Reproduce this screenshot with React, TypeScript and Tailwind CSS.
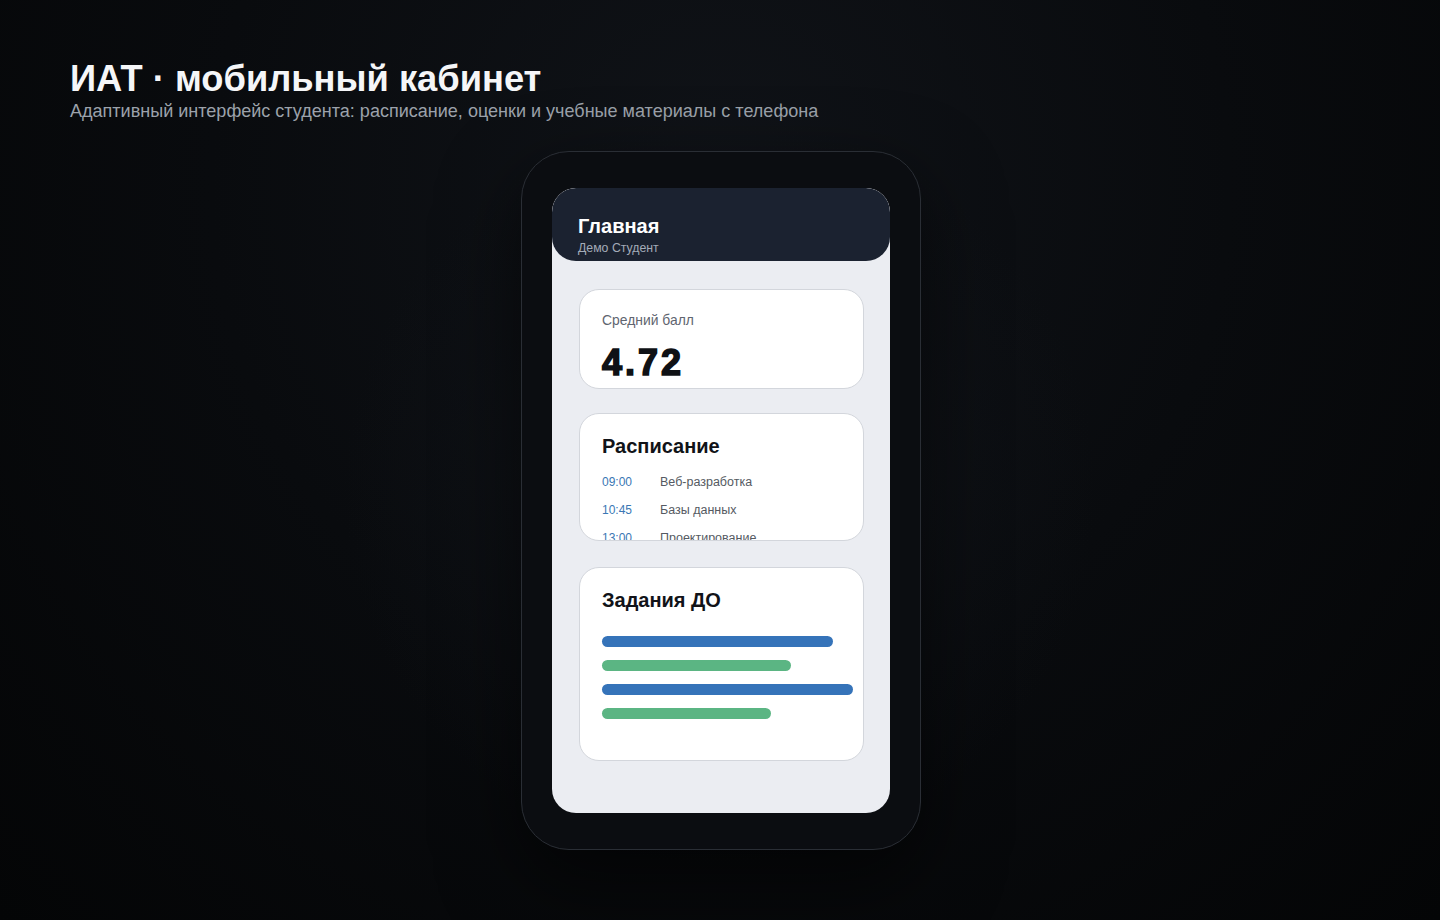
import React from "react";

const schedule = [
  { time: "09:00", subject: "Веб-разработка" },
  { time: "10:45", subject: "Базы данных" },
  { time: "13:00", subject: "Проектирование" },
];

const tasks = [
  { width: 231, color: "bg-[#3573b9]" },
  { width: 189, color: "bg-[#5bb583]" },
  { width: 251, color: "bg-[#3573b9]" },
  { width: 169, color: "bg-[#5bb583]" },
];

export default function App() {
  return (
    <div
      className="relative min-h-[920px] w-full overflow-hidden bg-[radial-gradient(ellipse_at_50%_20%,#101318_0%,#090b0e_50%,#040506_100%)]"
      style={{ fontFamily: '"Liberation Sans", Arial, sans-serif' }}
    >
      <div className="pointer-events-none absolute left-1/2 top-[110px] h-[760px] w-[760px] -translate-x-1/2 rounded-full bg-[radial-gradient(ellipse_at_center,rgba(24,28,36,0.55)_0%,rgba(16,19,24,0.35)_45%,transparent_70%)]" />

      <div className="relative px-[70px] pt-[58px]">
        <h1 className="text-[36.3px] font-bold leading-[42px] text-[#f5f6f8]">
          ИАТ · мобильный кабинет
        </h1>
        <p className="text-[18.05px] leading-[22px] text-[#9ca2ab]">
          Адаптивный интерфейс студента: расписание, оценки и учебные материалы с телефона
        </p>
      </div>

      <div className="relative mt-[29px] flex justify-center pl-[2px]">
        <div className="h-[699px] w-[400px] rounded-[48px] border border-[#2a2e35] bg-[#0b0d11] pb-[36px] pl-[30px] pr-[30px] pt-[36px] shadow-[0_30px_80px_rgba(0,0,0,0.6)]">
          <div className="flex h-full flex-col overflow-hidden rounded-[24px] bg-[#ebedf2]">
            <div className="h-[73px] shrink-0 rounded-[24px] bg-[#1b2230] pl-[26px] pt-[28px]">
              <div className="text-[20px] font-bold leading-[20px] text-white">Главная</div>
              <div className="mt-[4px] text-[12.3px] leading-[16px] text-[#a3abb8]">Демо Студент</div>
            </div>

            <div className="flex flex-col pl-[27px] pr-[26px] pt-[28px]">
              <div className="h-[100px] overflow-hidden rounded-[20px] border border-[#d3d6dc] bg-white p-[22px]">
                <div className="text-[13.9px] leading-[16px] text-[#5f6570]">Средний балл</div>
                <div className="mt-[15px] text-[36px] font-black leading-[40px] tracking-[3px] text-[#0f1115] [-webkit-text-stroke:1.6px_#0f1115]">
                  4.72
                </div>
              </div>

              <div className="mt-[24px] h-[128px] overflow-hidden rounded-[20px] border border-[#d3d6dc] bg-white p-[22px]">
                <div className="text-[20px] font-bold leading-[20px] text-[#111318]">Расписание</div>
                <div className="mt-[12px] flex flex-col">
                  {schedule.map((row) => (
                    <div key={row.time} className="flex h-[28px] items-center leading-[28px]">
                      <span className="w-[58px] text-[12px] text-[#3a77b4]">{row.time}</span>
                      <span className="text-[12.5px] text-[#555a62]">{row.subject}</span>
                    </div>
                  ))}
                </div>
              </div>

              <div className="mt-[26px] h-[194px] rounded-[20px] border border-[#d3d6dc] bg-white p-[22px]">
                <div className="text-[20px] font-bold leading-[20px] text-[#111318]">Задания ДО</div>
                <div className="mt-[26px] flex flex-col gap-[13px]">
                  {tasks.map((t, i) => (
                    <div
                      key={i}
                      className={`h-[11px] shrink-0 rounded-full ${t.color}`}
                      style={{ width: t.width }}
                    />
                  ))}
                </div>
              </div>
            </div>
          </div>
        </div>
      </div>
    </div>
  );
}
